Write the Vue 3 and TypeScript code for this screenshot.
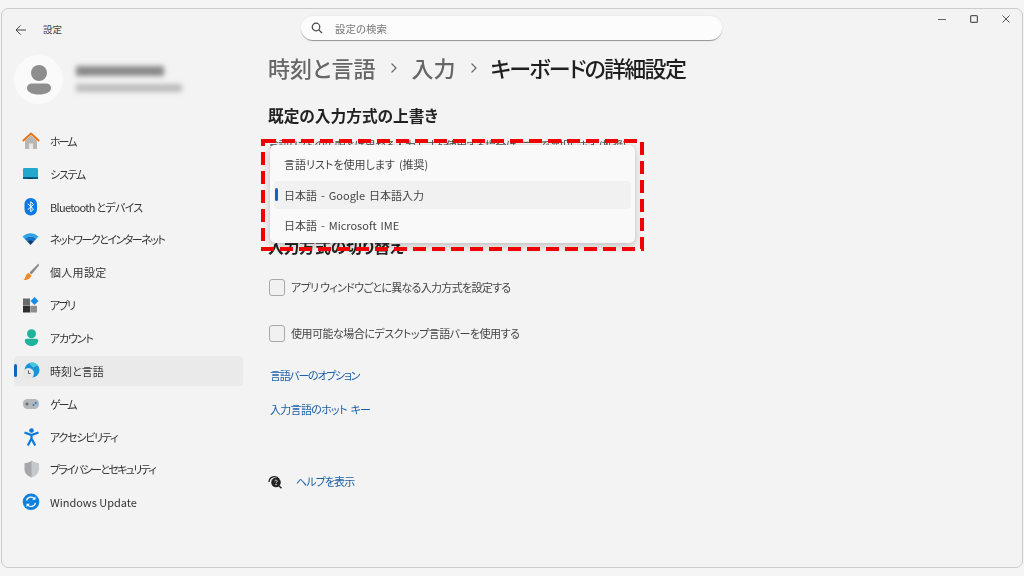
<script setup lang="ts">
interface NavItem { key: string; label: string; ls: number; active?: boolean }
const nav: NavItem[] = [
  { key: 'home', label: 'ホーム', ls: -2 },
  { key: 'system', label: 'システム', ls: -1.25 },
  { key: 'bt', label: 'Bluetooth とデバイス', ls: -0.7 },
  { key: 'wifi', label: 'ネットワークとインターネット', ls: -1.5 },
  { key: 'brush', label: '個人用設定', ls: 0.3 },
  { key: 'apps', label: 'アプリ', ls: -1.6 },
  { key: 'account', label: 'アカウント', ls: -1.2 },
  { key: 'time', label: '時刻と言語', ls: 0, active: true },
  { key: 'game', label: 'ゲーム', ls: -2 },
  { key: 'access', label: 'アクセシビリティ', ls: -1.25 },
  { key: 'shield', label: 'プライバシーとセキュリティ', ls: -1.7 },
  { key: 'update', label: 'Windows Update', ls: 0 },
]
const options = [
  { label: '言語リストを使用します (推奨)', selected: false },
  { label: '日本語 - Google 日本語入力', selected: true },
  { label: '日本語 - Microsoft IME', selected: false },
]
</script>

<template>
  <div class="page">
    <div class="window">
      <header class="titlebar">
        <div class="tb-left">
          <svg class="back" width="12" height="12" viewBox="0 0 12 12" fill="none" stroke="#444" stroke-width="1"><path d="M11 6H1.2M5.6 1.4 1 6l4.600 4.600" /></svg>
          <span class="tb-title">設定</span>
        </div>
        <div class="search">
          <svg width="12" height="12" viewBox="0 0 12 12" fill="none" stroke="#444" stroke-width="1.2"><circle cx="5" cy="5" r="3.8" /><path d="M7.8 7.8 11 11" /></svg>
          <span>設定の検索</span>
        </div>
        <div class="controls">
          <svg width="10" height="10" viewBox="0 0 10 10" stroke="#666" fill="none"><path d="M1 5.5h8" /></svg>
          <svg width="10" height="10" viewBox="0 0 10 10" stroke="#555" stroke-width="1.2" fill="none"><rect x="1.6" y="1.6" width="6.8" height="6.8" rx="1" /></svg>
          <svg width="10" height="10" viewBox="0 0 10 10" stroke="#555" fill="none"><path d="M1.5 1.5l7 7M8.5 1.5l-7 7" /></svg>
        </div>
      </header>

      <div class="body">
        <aside class="sidebar">
          <div class="profile">
            <div class="avatar">
              <svg width="26" height="30" viewBox="0 0 26 30" fill="#8e8e8e"><circle cx="13" cy="8" r="8" /><path d="M1 23c0-3 2-4.500 5-4.500h14c3 0 5 1.500 5 4.500 0 4-5 6.500-12 6.500S1 27 1 23z" /></svg>
            </div>
            <div class="who">
              <div class="blur-a"></div>
              <div class="blur-b"></div>
            </div>
          </div>
          <nav class="nav">
            <div v-for="item in nav" :key="item.key" class="nav-item" :class="{ active: item.active }">
              <svg class="nav-icon" width="18" height="18" viewBox="0 0 18 18">
                <template v-if="item.key === 'home'">
                  <path d="M3 8.500 9 3.500l6 5V17H3z" fill="#b9b5b2" />
                  <path d="M7 11.500h4V17H7z" fill="#e9e7e6" />
                  <path d="M.8 9 9 1.500 17.200 9" fill="none" stroke="#e8700f" stroke-width="1.800" />
                </template>
                <template v-else-if="item.key === 'system'">
                  <rect x="1" y="3" width="15" height="11" rx="1" fill="#22a7cf" />
                  <rect x="1" y="12" width="15" height="2" fill="#0a5f86" />
                  <rect x="5.500" y="13" width="6" height="1" fill="#063f5c" />
                </template>
                <template v-else-if="item.key === 'bt'">
                  <rect x="2.500" y="0" width="12.500" height="17.500" rx="6.200" fill="#0a78e6" />
                  <path d="M5.800 5.800 11.500 11 8.800 13.800V3.700L11.500 6.500 5.800 11.700" fill="none" stroke="#fff" stroke-width="1" />
                </template>
                <template v-else-if="item.key === 'wifi'">
                  <path d="M0.500 6.500C5.500 2 11.500 2 16.500 6.500L14.200 9C10.500 5.800 6.500 5.800 2.800 9z" fill="#2ea4ea" />
                  <path d="M2.800 9c3.700-3.200 7.700-3.200 11.400 0l-2.200 2.300c-2.300-1.800-4.700-1.800-7 0z" fill="#1273c4" />
                  <path d="M5 11.300c2.300-1.800 4.700-1.800 7 0L8.500 15z" fill="#07407e" />
                </template>
                <template v-else-if="item.key === 'brush'">
                  <path d="M16.500 .5 7.500 9.500l2 2L17 2.500z" fill="#8a8a8a" />
                  <path d="M7 10c-2.500.5-3 2-3.500 3.500C3.200 15 2.500 16.200 1.500 17c3 .4 6.500-.5 7.800-4.500z" fill="#ee8a2a" />
                </template>
                <template v-else-if="item.key === 'apps'">
                  <rect x="1" y="2.500" width="7" height="7" fill="#6a6a6a" />
                  <rect x="1" y="9.800" width="7" height="6.700" fill="#2e2e2e" />
                  <rect x="8.300" y="9.800" width="6.700" height="6.700" fill="#8d8d8d" />
                  <path d="M12.500 1 16.500 5 12.500 9 8.500 5z" fill="#1a8ae6" />
                </template>
                <template v-else-if="item.key === 'account'">
                  <circle cx="9.500" cy="4.800" r="4.500" fill="#1fb39b" />
                  <path d="M2.800 11.500c0-1 .8-1.800 1.800-1.800h9.800c1 0 1.800.8 1.800 1.800 0 3-3 5.500-6.700 5.500s-6.700-2.500-6.700-5.500z" fill="#1fb39b" />
                </template>
                <template v-else-if="item.key === 'time'">
                  <circle cx="10" cy="8" r="7.500" fill="#1c93d9" />
                  <path d="M10 .5a7.500 7.500 0 0 1 6 3l-5 2-4-4z" fill="#46c8dc" />
                  <circle cx="6.500" cy="11.500" r="5.500" fill="#e6e6e6" />
                  <path d="M6.500 8.500v3h2" fill="none" stroke="#555" stroke-width=".9" />
                </template>
                <template v-else-if="item.key === 'game'">
                  <rect x="1" y="4" width="16" height="10" rx="4.500" fill="#b4b8bd" />
                  <path d="M3.500 9h3M5 7.500v3" stroke="#555" stroke-width="1" />
                  <circle cx="11.500" cy="10" r="1" fill="#1c78d0" />
                  <circle cx="13.800" cy="8" r="1" fill="#1c78d0" />
                </template>
                <template v-else-if="item.key === 'access'">
                  <circle cx="9.500" cy="2.500" r="2.300" fill="#0a78d8" />
                  <path d="M2.500 4.500 9.500 7l7-2.500M9.500 7v4M9.500 10.500 5.800 17.500M9.500 10.500l3.700 7" fill="none" stroke="#0a78d8" stroke-width="2.200" />
                </template>
                <template v-else-if="item.key === 'shield'">
                  <path d="M9.500 .8c2 1.600 4.500 2.300 7 2.400v6c0 4-3 6.600-7 8.300-4-1.700-7-4.300-7-8.300v-6c2.500-.1 5-.8 7-2.400z" fill="#a4a8ac" />
                  <path d="M9.500 .8c2 1.600 4.500 2.300 7 2.400v6c0 4-3 6.600-7 8.300z" fill="#c6c9cb" />
                </template>
                <template v-else>
                  <circle cx="9" cy="8.800" r="8.300" fill="#0f80dc" />
                  <path d="M4.500 7.500A4.700 4.700 0 0 1 12.800 6M13.500 10a4.700 4.700 0 0 1-8.300 1.600" fill="none" stroke="#fff" stroke-width="1.200" />
                  <path d="M13.500 3.500v3.300h-3.300zM4.500 14V10.700h3.300z" fill="#fff" />
                </template>
              </svg>
              <span :style="{ letterSpacing: item.ls + 'px' }">{{ item.label }}</span>
            </div>
          </nav>
        </aside>

        <main class="main">
          <h1 class="crumbs">
            <span class="dim">時刻と言語</span>
            <svg width="8" height="12" viewBox="0 0 8 12" fill="none" stroke="#666" stroke-width="1.200"><path d="M1.500 1.500 6 6l-4.500 4.500" /></svg>
            <span class="dim">入力</span>
            <svg width="8" height="12" viewBox="0 0 8 12" fill="none" stroke="#666" stroke-width="1.200"><path d="M1.500 1.500 6 6l-4.500 4.500" /></svg>
            <span class="cur">キーボードの詳細設定</span>
          </h1>

          <section class="override">
            <h2>既定の入力方式の上書き</h2>
            <p class="hint">言語リストの先頭とは異なる入力方式を使用する場合は、ここで選択します (推奨)</p>
            <div class="menu">
              <div v-for="o in options" :key="o.label" class="opt" :class="{ sel: o.selected }">{{ o.label }}</div>
            </div>
            <svg class="mark" width="383" height="112" viewBox="0 0 383 112" fill="none">
              <rect x="2" y="2" width="379" height="108" stroke="#f00000" stroke-width="4" stroke-dasharray="13 6" />
            </svg>
          </section>

          <h2 class="switch-h">入力方式の切り替え</h2>

          <label class="check first-check"><span class="box"></span>アプリ ウィンドウごとに異なる入力方式を設定する</label>
          <label class="check second"><span class="box"></span>使用可能な場合にデスクトップ言語バーを使用する</label>

          <a class="link first">言語バーのオプション</a>
          <a class="link next">入力言語のホット キー</a>

          <div class="help">
            <svg width="15" height="15" viewBox="0 0 15 15">
              <path d="M1 8a5.500 5.500 0 0 1 10-3" fill="none" stroke="#222" stroke-width="1.300" />
              <circle cx="8" cy="8.500" r="4.800" fill="#222" />
              <path d="M11 12l2.500 2.200" stroke="#222" stroke-width="1.500" />
              <circle cx="8" cy="10.500" r=".7" fill="#fff" />
              <path d="M6.800 7.200a1.200 1.200 0 1 1 1.800 1.100c-.4.200-.6.400-.6.900" fill="none" stroke="#fff" stroke-width=".8" />
            </svg>
            <a class="link help-link">ヘルプを表示</a>
          </div>
        </main>
      </div>
    </div>
  </div>
</template>

<style>
html, body { margin: 0; background: #f5f5f5; }
</style>

<style scoped>
.page {
  width: 1024px;
  height: 576px;
  padding: 8px 1px;
  box-sizing: border-box;
  overflow: hidden;
  font-family: "Noto Sans CJK JP", "Noto Sans", sans-serif;
  font-feature-settings: "palt";
  color: #2b2b2b;
}
.window {
  height: 560px;
  box-sizing: border-box;
  background: #f3f3f3;
  border: 1px solid #cbcbcb;
  border-radius: 7px;
  display: flex;
  flex-direction: column;
  filter: blur(.3px);
}
.titlebar {
  height: 39px;
  flex: none;
  display: flex;
  align-items: flex-start;
}
.tb-left {
  width: 299px;
  flex: none;
  padding: 14px 0 0 13px;
  box-sizing: border-box;
  display: flex;
  align-items: center;
  gap: 16px;
  font-size: 9.500px;
  line-height: 13px;
  color: #444;
}
.search {
  width: 421px;
  height: 25px;
  margin-top: 7px;
  box-sizing: border-box;
  flex: none;
  background: #fcfcfc;
  border-radius: 12px;
  border-bottom: 1px solid #9a9a9a;
  box-shadow: 0 0 0 1px #ececec;
  display: flex;
  align-items: center;
  gap: 12px;
  padding-left: 10px;
  font-size: 10.500px;
  color: #777;
}
.controls {
  margin-left: auto;
  width: 85px;
  padding: 5px 11px 0 0;
  box-sizing: border-box;
  display: flex;
  justify-content: space-between;
}
.body {
  flex: 1;
  min-height: 0;
  display: flex;
}
.sidebar {
  width: 266px;
  flex: none;
  padding-left: 12px;
  box-sizing: border-box;
}
.profile {
  display: flex;
  align-items: flex-start;
  gap: 13px;
  margin-top: 7px;
}
.avatar {
  width: 49px;
  height: 49px;
  border-radius: 50%;
  background: #fafafa;
  display: flex;
  align-items: center;
  justify-content: center;
}
.who { padding-top: 11px; }
.blur-a {
  width: 88px;
  height: 10px;
  background: #8a8a8a;
  filter: blur(2.500px);
}
.blur-b {
  width: 106px;
  height: 8px;
  margin-top: 8px;
  background: #bdbdbd;
  filter: blur(2.500px);
}
.nav {
  margin-top: 22px;
  width: 229px;
  display: flex;
  flex-direction: column;
  gap: 3px;
}
.nav-item {
  height: 29.850px;
  display: flex;
  align-items: center;
  gap: 10px;
  padding-left: 8px;
  border-radius: 4px;
  font-size: 11px;
  color: #333;
  position: relative;
  white-space: nowrap;
}
.nav-item.active { background: #eaeaea; }
.nav-item.active::before {
  content: "";
  position: absolute;
  left: 0;
  top: 8px;
  width: 2.500px;
  height: 13px;
  border-radius: 2px;
  background: #0f66c0;
}
.nav-icon { flex: none; }
.main {
  flex: 1;
  min-width: 0;
}
.crumbs {
  margin: 4px 0 0;
  height: 30px;
  display: flex;
  align-items: center;
  font-size: 22px;
  line-height: 30px;
  font-weight: 500;
}
.crumbs svg { margin: 2px 13px 0 15px; }
.dim { color: #666; }
.cur { color: #1f1f1f; font-weight: 500; letter-spacing: -1.700px; margin-left: -1px; }
.override {
  position: relative;
  margin-top: 23px;
}
h2 {
  margin: 0;
  font-size: 15.700px;
  line-height: 22px;
  font-weight: 700;
  color: #222;
}
.hint {
  margin: 10px 0 0;
  font-size: 11px;
  line-height: 16px;
  color: #444;
  letter-spacing: -.6px;
  white-space: nowrap;
}
.menu {
  position: absolute;
  left: 2px;
  top: 40px;
  width: 365px;
  height: 98px;
  box-sizing: border-box;
  padding: 5px 4px;
  background: #f9f9f9;
  border-radius: 5px;
  box-shadow: 0 0 1px #aaa, 0 3px 9px rgba(0, 0, 0, .2);
  z-index: 2;
}
.opt {
  height: 28px;
  margin-bottom: 2.700px;
  padding-left: 10px;
  display: flex;
  align-items: center;
  border-radius: 4px;
  font-size: 11px;
  word-spacing: 1.500px;
  color: #444;
  position: relative;
}
.opt.sel { background: #f1f1f1; }
.opt.sel::before {
  content: "";
  position: absolute;
  left: 1px;
  top: 7px;
  width: 2.500px;
  height: 13px;
  border-radius: 2px;
  background: #0f66c0;
}
.mark {
  position: absolute;
  left: -7px;
  top: 34px;
  z-index: 3;
}
.switch-h { margin-top: 83px; }
.check {
  display: flex;
  align-items: center;
  gap: 6px;
  font-size: 11px;
  line-height: 18px;
  color: #444;
  margin: 20px 0 0 1px;
}
.first-check { letter-spacing: -.7px; }
.check.second { margin-top: 28px; letter-spacing: -.5px; }
.box {
  width: 14px;
  height: 15px;
  flex: none;
  border: 1px solid #a8a8a8;
  border-radius: 3px;
  background: #f1f1f1;
}
.link {
  display: block;
  font-size: 11px;
  line-height: 16px;
  color: #1b5fa8;
  text-decoration: none;
}
.link.first { margin: 25px 0 0 2px; letter-spacing: -1.300px; }
.link.next { margin: 18px 0 0 2px; letter-spacing: -.7px; word-spacing: 2px; }
.help-link { letter-spacing: -.9px; }
.help {
  margin-top: 56px;
  display: flex;
  align-items: center;
  gap: 13px;
}
</style>
